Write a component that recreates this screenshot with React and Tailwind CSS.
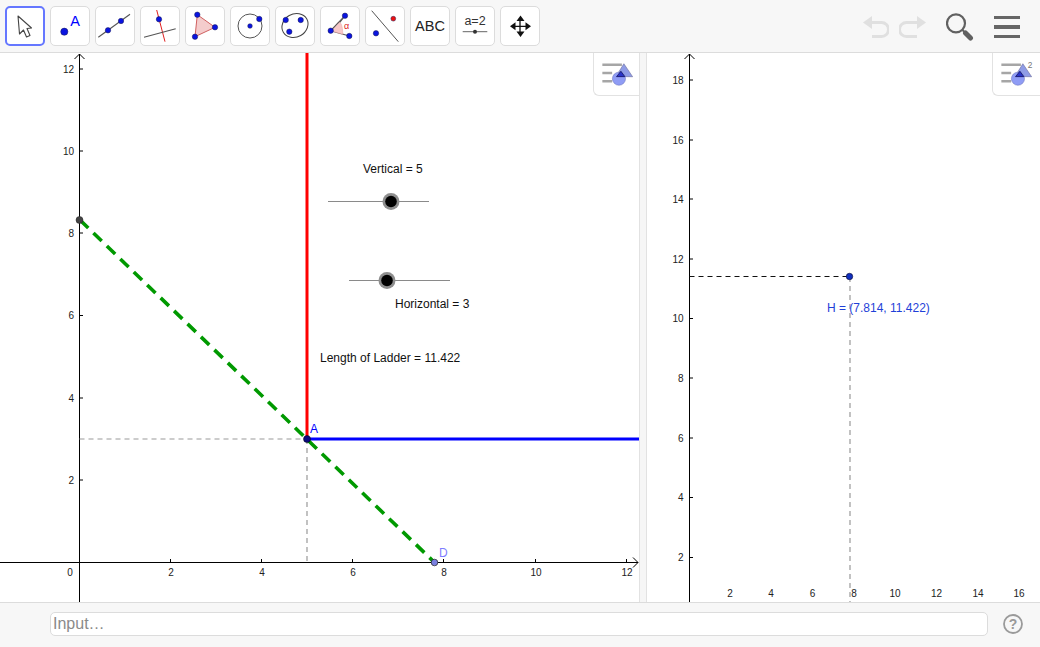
const sans = '"Liberation Sans", Arial, sans-serif'

function Dot({ x, y, r = 2.7, fill = '#0a14e0' }) {
  return <circle cx={x} cy={y} r={r} fill={fill} stroke="#1a1a50" strokeWidth="0.5" />
}

const tools = [
  // move
  <path key="a" d="M13 10l1.500 18 4-4 3 7 3.500-1.500-3-7 4.500-.5z" fill="#fff" stroke="#444" strokeWidth="1.100" strokeLinejoin="round" />,
  // point
  <g key="b">
    <Dot x={14.300} y={25.700} r={3.600} />
    <text x={20.300} y={19.500} fontSize="14.500" fill="#0000ff" fontFamily={sans}>A</text>
  </g>,
  // line
  <g key="c">
    <path d="M3.300 31.300 35 8.300" stroke="#555" strokeWidth="1.100" />
    <Dot x={13} y={24.300} />
    <Dot x={26} y={15} />
  </g>,
  // perpendicular
  <g key="d">
    <path d="M16.700 4 25 35.700" stroke="#e02020" strokeWidth="1" />
    <path d="M4 31.300 35.700 22.700" stroke="#555" strokeWidth="1.100" />
    <Dot x={19} y={13.300} />
  </g>,
  // polygon
  <g key="e">
    <path d="M12.300 8.700 30 21.300 10 30.700z" fill="#f4cccc" stroke="#d06060" strokeWidth="1" />
    <Dot x={12.300} y={8.700} />
    <Dot x={30} y={21.300} />
    <Dot x={10} y={30.700} />
  </g>,
  // circle
  <g key="f">
    <circle cx="20" cy="20" r="12" fill="none" stroke="#555" strokeWidth="1" />
    <Dot x={20} y={20} r={2.300} />
    <Dot x={29.300} y={13} />
  </g>,
  // ellipse
  <g key="g">
    <ellipse cx="20" cy="19.500" rx="13.500" ry="11.500" transform="rotate(-30 20 19.500)" fill="none" stroke="#444" strokeWidth="1" />
    <Dot x={10.700} y={14} />
    <Dot x={25.700} y={14} />
    <Dot x={14.300} y={25.700} />
  </g>,
  // angle
  <g key="h">
    <path d="M19 17.500 25 9.700M10.700 24.700 29.300 30" stroke="#555" strokeWidth="1.100" fill="none" />
    <path d="M10.700 24.700 19 15.500c2.500 2 3.500 4.500 3.800 12.800z" fill="#f8c8c8" stroke="#e8a0a0" strokeWidth="0.500" />
    <path d="M10.700 24.700 25 9.700" stroke="#555" strokeWidth="1.100" />
    <text x={24} y={23} fontSize="9" fill="#e02020" fontFamily={sans}>α</text>
    <Dot x={25} y={9.700} />
    <Dot x={10.700} y={24.700} />
    <Dot x={29.300} y={30} />
  </g>,
  // reflect
  <g key="i">
    <path d="M6.700 4.700 33.300 35.700" stroke="#555" strokeWidth="1" />
    <Dot x={28.300} y={12.700} r={2.400} fill="#ee1010" />
    <Dot x={11} y={27.300} />
  </g>,
  // text
  <text key="j" x={20} y={25} fontSize="14.500" textAnchor="middle" fill="#222" fontFamily={sans}>ABC</text>,
  // slider
  <g key="k">
    <text x={20} y={19} fontSize="12.500" textAnchor="middle" fill="#333" fontFamily={sans}>a=2</text>
    <path d="M7.700 25.700h24.600" stroke="#666" strokeWidth="1" />
    <circle cx="20" cy="25.700" r="2" fill="#333" />
  </g>,
  // move view
  <g key="l" fill="#111">
    <path d="M20 12v17M12 20.300h17" stroke="#111" strokeWidth="1.300" />
    <path d="M20.500 9.500l-4 5.500h8zM20.500 31l-4-5.500h8zM10 20.300l5.500-4v8zM31 20.300l-5.500-4v8z" />
  </g>,
]

function ToolButton({ children, active }) {
  return (
    <button
      type="button"
      className={`h-10 w-10 shrink-0 rounded-[5px] bg-white ${
        active ? 'border-2 border-[#6577ff]' : 'border border-[#dcdcdc]'
      }`}
    >
      <svg
        viewBox={active ? '2 2 36 36' : '1 1 38 38'}
        className={active ? 'block h-9 w-9' : 'block h-[38px] w-[38px]'}
      >
        {children}
      </svg>
    </button>
  )
}

function StyleToggle({ two, className }) {
  return (
    <div className={`absolute top-0 rounded-bl-[6px] border-b border-l border-[#e2e2e2] bg-white ${className}`}>
      <svg viewBox="1 0 47 43" className="block h-[42px] w-[47px]">
        <path d="M9 12h20M9 20.500h10M9 29h10" stroke="#a6a6a6" strokeWidth="2.600" />
        <path d="M23 24 31 11l9 13.300z" fill="#8f9ce6" stroke="#68689a" strokeWidth="0.600" />
        <circle cx="26" cy="26.300" r="6.700" fill="#8f9cf5" stroke="#7078c0" strokeWidth="0.600" />
        <path d="M23.500 24.200 28 18.700l4 5.500z" fill="#2a35c8" stroke="#101060" strokeWidth="0.800" />
        {two && <text x={36} y={15.500} fontSize="8.500" fill="#777" fontFamily={sans}>2</text>}
      </svg>
    </div>
  )
}

function Label({ x, y, children, anchor = 'middle', fill = '#222', size = 10 }) {
  return (
    <text x={x} y={y} fontSize={size} textAnchor={anchor} fill={fill} fontFamily={sans}>
      {children}
    </text>
  )
}

function Slider({ x1, x2, y, knob }) {
  return (
    <g>
      <path d={`M${x1} ${y}h${x2 - x1}`} stroke="#8a8a8a" strokeWidth="1" />
      <circle cx={knob} cy={y} r="8.500" fill="#8e8e8e" />
      <circle cx={knob} cy={y} r="5.800" fill="#000" />
    </g>
  )
}

function LeftGraph() {
  const xs = [[2, 171], [4, 262], [6, 353], [8, 444], [10, 536], [12, 627]]
  const ys = [[2, 480], [4, 398], [6, 315.500], [8, 233], [10, 151], [12, 69]]
  return (
    <svg viewBox="0 53 639 549" className="block h-full w-full">
      <path d="M0 562.500H638M633 557.500l5 5-5 5" fill="none" stroke="#000" strokeWidth="1" />
      <path d="M79.500 602V54M74.500 59l5-5 5 5" fill="none" stroke="#000" strokeWidth="1" />
      {xs.map(([n, x]) => (
        <g key={n}>
          <path d={`M${x - 0.500} 559v3.500`} stroke="#000" />
          <Label x={x} y={576}>{n}</Label>
        </g>
      ))}
      {ys.map(([n, y]) => (
        <g key={n}>
          <path d={`M79.500 ${y}h3.500`} stroke="#000" />
          <Label x={74} y={y + 3.500} anchor="end">{n}</Label>
        </g>
      ))}
      <Label x={70} y={576}>0</Label>

      <path d="M79.500 439H307M307 439V562" stroke="#999" strokeWidth="1.200" strokeDasharray="5 4" fill="none" />
      <path d="M307 53V439" stroke="#ff0000" strokeWidth="3" />
      <path d="M307 439H639" stroke="#0000ff" strokeWidth="3" />
      <path d="M80 220 434 562" stroke="#009900" strokeWidth="3.600" strokeDasharray="11.500 7.190" />

      <circle cx="79.500" cy="220" r="3.500" fill="#444" stroke="#222" strokeWidth="0.500" />
      <circle cx="307" cy="439" r="3.500" fill="#0a0a80" stroke="#000" strokeWidth="0.500" />
      <circle cx="434.500" cy="562.500" r="3.300" fill="#7a80e0" stroke="#222" strokeWidth="0.700" />
      <Label x={310} y={433} anchor="start" fill="#0000ff" size={12}>A</Label>
      <Label x={439} y={557} anchor="start" fill="#7d7dff" size={12}>D</Label>

      <Label x={363} y={173} anchor="start" fill="#111" size={12}>Vertical = 5</Label>
      <Slider x1={328} x2={429} y={201.500} knob={391} />
      <Slider x1={349} x2={450} y={280.500} knob={387} />
      <Label x={395} y={308} anchor="start" fill="#111" size={12}>Horizontal = 3</Label>
      <Label x={320} y={362} anchor="start" fill="#111" size={12}>Length of Ladder = 11.422</Label>
    </svg>
  )
}

function RightGraph() {
  const xs = [[2, 730], [4, 771], [6, 812.500], [8, 854], [10, 895], [12, 936.500], [14, 978], [16, 1019]]
  const ys = [[2, 557.500], [4, 497.500], [6, 438], [8, 378], [10, 318.500], [12, 259], [14, 199], [16, 140], [18, 80]]
  return (
    <svg viewBox="647 53 393 549" className="block h-full w-full">
      <path d="M689.500 602V54M684.500 59l5-5 5 5" fill="none" stroke="#000" strokeWidth="1" />
      {ys.map(([n, y]) => (
        <g key={n}>
          <path d={`M689.500 ${y}h3.500`} stroke="#000" />
          <Label x={683.500} y={y + 3.500} anchor="end">{n}</Label>
        </g>
      ))}
      {xs.map(([n, x]) => (
        <Label key={n} x={x} y={597}>{n}</Label>
      ))}
      <path d="M850 277V602" stroke="#999" strokeWidth="1.200" strokeDasharray="5 4" />
      <path d="M689.500 276.500H850" stroke="#111" strokeWidth="1" strokeDasharray="5 4" />
      <circle cx="849.500" cy="276.500" r="3.200" fill="#1030c0" stroke="#101040" strokeWidth="0.700" />
      <Label x={827} y={312} anchor="start" fill="#1f3fd8" size={12}>H = (7.814, 11.422)</Label>
    </svg>
  )
}

export default function App() {
  return (
    <div className="flex h-[647px] w-[1040px] flex-col overflow-hidden bg-white" style={{ fontFamily: sans }}>
      <div className="flex h-[53px] shrink-0 items-start justify-between border-b border-[#dcdcdc] bg-[#f7f7f7] pl-[5px] pt-[6px]">
        <div className="flex gap-[5px]">
          {tools.map((icon, i) => (
            <ToolButton key={i} active={i === 0}>{icon}</ToolButton>
          ))}
        </div>
        <div className="mr-5 mt-[7px] flex h-7 items-center">
          <svg viewBox="0 0 26 22" className="h-[22px] w-[26px]">
            <path d="M9 6.500h9.500a6 6 0 0 1 0 14H9" fill="none" stroke="#e0e0e0" strokeWidth="3" />
            <path d="M9 0 0 6.500 9 13z" fill="#e0e0e0" />
          </svg>
          <svg viewBox="0 0 27 22" className="ml-[10px] h-[22px] w-[27px]">
            <path d="M18 6.500H7.500a6 6 0 0 0 0 14H18" fill="none" stroke="#e0e0e0" strokeWidth="3" />
            <path d="M18 0l9 6.500-9 6.500z" fill="#e0e0e0" />
          </svg>
          <svg viewBox="0 0 28 28" className="ml-5 h-7 w-7">
            <circle cx="10" cy="10.300" r="9" fill="none" stroke="#616161" strokeWidth="2.200" />
            <path d="M16.500 17l3 3" stroke="#616161" strokeWidth="2" />
            <path d="M19.500 20l5 5" stroke="#616161" strokeWidth="5" strokeLinecap="round" />
          </svg>
          <div className="ml-5 flex w-[26px] flex-col gap-[6px]">
            <div className="h-[3.500px] bg-[#666]" />
            <div className="h-[3.500px] bg-[#666]" />
            <div className="h-[3.500px] bg-[#666]" />
          </div>
        </div>
      </div>

      <div className="flex min-h-0 flex-1">
        <div className="relative w-[639px] shrink-0">
          <LeftGraph />
          <StyleToggle className="right-0 w-[46px]" />
        </div>
        <div className="w-2 shrink-0 border-l border-r border-[#e2e2e2] bg-[#f6f6f6]" />
        <div className="relative min-w-0 flex-1">
          <RightGraph />
          <StyleToggle two className="right-0 w-[48px]" />
        </div>
      </div>

      <div className="flex h-[45px] shrink-0 items-center border-t border-[#dcdcdc] bg-[#f7f7f7] pb-[2px] pl-[50px] pr-4">
        <input
          type="text"
          placeholder="Input…"
          className="h-6 w-[938px] rounded-[5px] border border-[#dcdcdc] bg-white px-[2px] text-base text-[#333] outline-none placeholder:text-[#8a8a8a]"
        />
        <svg viewBox="0 0 20 20" className="ml-[15px] h-5 w-5 shrink-0">
          <circle cx="10" cy="10" r="9" fill="none" stroke="#9a9a9a" strokeWidth="1.800" />
          <text x={10} y={15} fontSize="14" fontWeight="bold" textAnchor="middle" fill="#9a9a9a" fontFamily={sans}>?</text>
        </svg>
      </div>
    </div>
  )
}
